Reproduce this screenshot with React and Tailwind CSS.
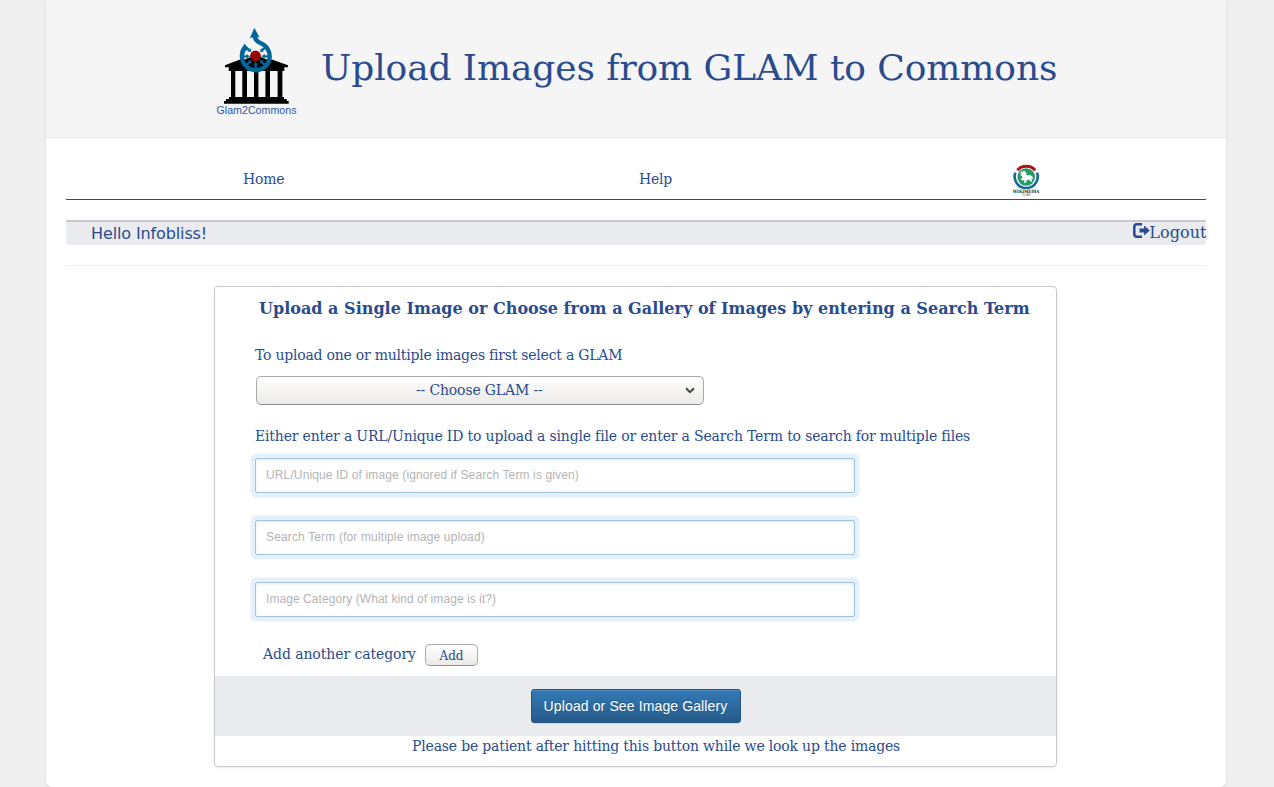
import React from "react";

function Glam2CommonsLogo() {
  const angles = [-132, -88, -45, 0, 45, 88, 132];
  return (
    <svg className="block h-[98px] w-[88px] shrink-0 overflow-visible" viewBox="215 25 88 98">
      <path d="M225 65.3 L240 59.5 H272 L288 65.3 V67.3 H284.3 V71 H228.7 V67.3 H225 Z" fill="#000" />
      <path d="M231 71h4.3v26H231zM242.3 71h4.7v26h-4.7zM254 71h4.4v26H254zM265.4 71h4.6v26h-4.6zM277.6 71h4.8v26h-4.8z" fill="#000" />
      <path d="M229 97h55v2h2.7v2h2v2.8H224V101h2v-2h3z" fill="#000" />
      <circle cx="255.7" cy="56" r="13" fill="#f5f5f5" />
      <path d="M243.2 60 a13 13 0 0 0 25 0 L256 55Z" fill="#000" />
      <g fill="#069">
        {angles.map((a) => (
          <path key={a} d="M253.2 65.4 l1.4 -.6 v5 h2.2 v-5 l1.4 .6 -2.5 -3.6z" transform={`rotate(${a} 255.7 56)`} />
        ))}
      </g>
      <path d="M245 47.6 A13.9 13.9 0 1 0 267.7 49.2 C265.5 45.4 262.5 43.8 259.5 42.6 C256.5 41.2 254.9 39.5 254.6 35" fill="none" stroke="#069" strokeWidth="4.3" />
      <path d="M254.3 27.8 L259.6 37.6 L254.8 36.6 L249.8 38.2Z" fill="#069" />
      <path d="M244.4 43.6 L249.3 49.8 L240 52Z" fill="#069" />
      <circle cx="255.5" cy="56" r="5.4" fill="#900" />
      <text x="216.5" y="113.8" textLength="80" lengthAdjust="spacingAndGlyphs" fill="#2f55a8" fontSize="11.5" fontFamily="Liberation Sans, sans-serif">Glam2Commons</text>
    </svg>
  );
}

function WikimediaGlamLogo() {
  return (
    <svg className="block h-[36px] w-[34px] overflow-visible" viewBox="1009 163 34 36">
      <path d="M1017.4 170.2 A12 12 0 0 1 1035.2 170.2" fill="none" stroke="#a5141c" strokeWidth="3" />
      <path d="M1015.4 172.6 A11.4 11.4 0 0 0 1025 188 V189 M1037 172.6 A11.4 11.4 0 0 1 1027.4 188 V189" fill="none" stroke="#146a98" strokeWidth="2.6" />
      <circle cx="1026.2" cy="177" r="8.8" fill="#2a9a68" />
      <path d="M1021 171 l1.5 1 1.5-1.5 2 2 1 3 3-.5 2.5 1.5 .5 3-1.5-1 .5 3.5-2-1-1-1.5-2 .5-1 2.5-2 .5 .5-3-2.5 .5-1.5-1.5 2-1.2-.5-2-1.5-.3z" fill="#fff" />
      <text x="1012.8" y="192.7" textLength="26.5" lengthAdjust="spacingAndGlyphs" fill="#222" fontSize="4.6" fontWeight="700" fontFamily="DejaVu Serif, serif">WIKIMEDIA</text>
      <text x="1022" y="196.2" textLength="8.5" lengthAdjust="spacingAndGlyphs" fill="#777" fontSize="3.2" fontFamily="Liberation Sans, sans-serif">GLAM</text>
    </svg>
  );
}

function Field({ placeholder, tracking }) {
  return (
    <input
      placeholder={placeholder}
      className={`block h-[35px] w-[600px] rounded-[2px] border border-[#a0c3e0] bg-white px-[10px] pb-[2px] font-['Liberation_Sans',Arial,sans-serif] text-[12px] text-[#555] shadow-[inset_0_1px_3px_rgba(0,0,0,0.1),0_0_0_4.5px_#e4f1fa] outline-none placeholder:text-[#b4b4b4] ${tracking}`}
    />
  );
}

export default function App() {
  return (
    <div className="h-[787px] overflow-hidden bg-[#efefef] pl-[46px] font-['DejaVu_Serif',serif] text-[14px] leading-[20px] whitespace-nowrap text-[#2a4b8d]">
      <main className="h-[787px] w-[1180px] rounded-b-[6px] bg-white shadow-[0_1px_2px_rgba(0,0,0,0.15)]">
        <header className="flex h-[138px] border-b border-[#e9e9e9] bg-[#f5f5f5] pt-[25px] pl-[169px]">
          <Glam2CommonsLogo />
          <h1 className="ml-[18px] pt-[23px] text-[36px] leading-[40px] tracking-[-0.1px]">Upload Images from GLAM to Commons</h1>
        </header>

        <div className="px-5">
          <nav className="flex h-[62px] border-b border-[#2a4b8d] pt-[25px]">
            <a className="w-[396px] pt-[6px] pl-[177px] tracking-[-0.25px]">Home</a>
            <a className="w-[547px] pt-[6px] pl-[177px] tracking-[-0.25px]">Help</a>
            <WikimediaGlamLogo />
          </nav>

          <div className="mt-5 flex h-[25px] justify-between rounded-b-[4px] border-t-2 border-[#c8c9cc] bg-[#eaebef] text-[16px] leading-[20px]">
            <span className="pt-[2px] pl-[25px] font-['DejaVu_Sans',sans-serif] tracking-[-0.12px]">Hello Infobliss!</span>
            <a className="-mr-px flex">
              <svg className="mt-px h-[16px] w-[17px]" viewBox="0 0 17 16">
                <path d="M9 1.3H4Q1.3 1.3 1.3 4V11Q1.3 13.7 4 13.7H9" fill="none" stroke="#2a4b8d" strokeWidth="2.5" />
                <path d="M6.5 5.6h4.6V2.6l5.7 4.9-5.7 4.9V9.4H6.5z" fill="#2a4b8d" />
              </svg>
              <span className="-ml-[0.5px] pt-px pr-[0.5px] tracking-[0.05px]">Logout</span>
            </a>
          </div>

          <hr className="mt-5 border-t border-[#eee]" />

          <section className="mt-5 ml-[148px] h-[481px] w-[843px] rounded-[4px] border border-[#c8c8c8] shadow-[0_1px_2px_rgba(0,0,0,0.08)]">
            <div className="h-[389px] pl-10">
              <h2 className="pt-[12px] pl-1 text-[16px] font-bold tracking-[0.015px]">Upload a Single Image or Choose from a Gallery of Images by entering a Search Term</h2>
              <p className="mt-[26px] tracking-[-0.226px]">To upload one or multiple images first select a GLAM</p>
              <button className="mt-[11px] ml-px flex h-[29px] w-[448px] items-center rounded-[5px] border border-[#aaa] border-b-[#909090] bg-linear-to-b from-white to-[#ebeae8] pl-[159px]">
                <span className="w-[269px] pb-[2px] text-left tracking-[-0.16px]">-- Choose GLAM --</span>
                <svg className="h-[7px] w-[10px]" viewBox="0 0 10 7">
                  <path d="M1 1.3 L5 5.2 L9 1.3" fill="none" stroke="#444" strokeWidth="1.9" />
                </svg>
              </button>
              <p className="mt-[21px] tracking-[-0.17px]">Either enter a URL/Unique ID to upload a single file or enter a Search Term to search for multiple files</p>
              <div className="mt-3 flex flex-col gap-[27px]">
                <Field placeholder="URL/Unique ID of image (ignored if Search Term is given)" tracking="tracking-[0.125px]" />
                <Field placeholder="Search Term (for multiple image upload)" tracking="tracking-[0.145px]" />
                <Field placeholder="Image Category (What kind of image is it?)" tracking="tracking-[0.065px]" />
              </div>
              <div className="mt-[27px] flex pl-2">
                <span className="w-[162px] tracking-[-0.08px]">Add another category</span>
                <button className="h-[22px] w-[53px] rounded-[5px] border border-[#aaa] border-b-[#909090] bg-linear-to-b from-white to-[#ebeae8] pt-px text-[12px] leading-[20px]">Add</button>
              </div>
            </div>
            <div className="flex h-[60px] justify-center bg-[#eaebef] pt-[13px]">
              <button className="h-[34px] w-[210px] rounded-[3px] border border-[#245580] bg-linear-to-b from-[#337ab7] to-[#265a88] pb-px font-['Liberation_Sans',Arial,sans-serif] text-[14px] tracking-[0.12px] text-white shadow-[inset_0_1px_0_rgba(255,255,255,0.15),0_1px_1px_rgba(0,0,0,0.075)] [text-shadow:0_-1px_0_rgba(0,0,0,0.2)]">Upload or See Image Gallery</button>
            </div>
            <p className="pl-[197px] tracking-[-0.183px]">Please be patient after hitting this button while we look up the images</p>
          </section>
        </div>
      </main>
    </div>
  );
}
